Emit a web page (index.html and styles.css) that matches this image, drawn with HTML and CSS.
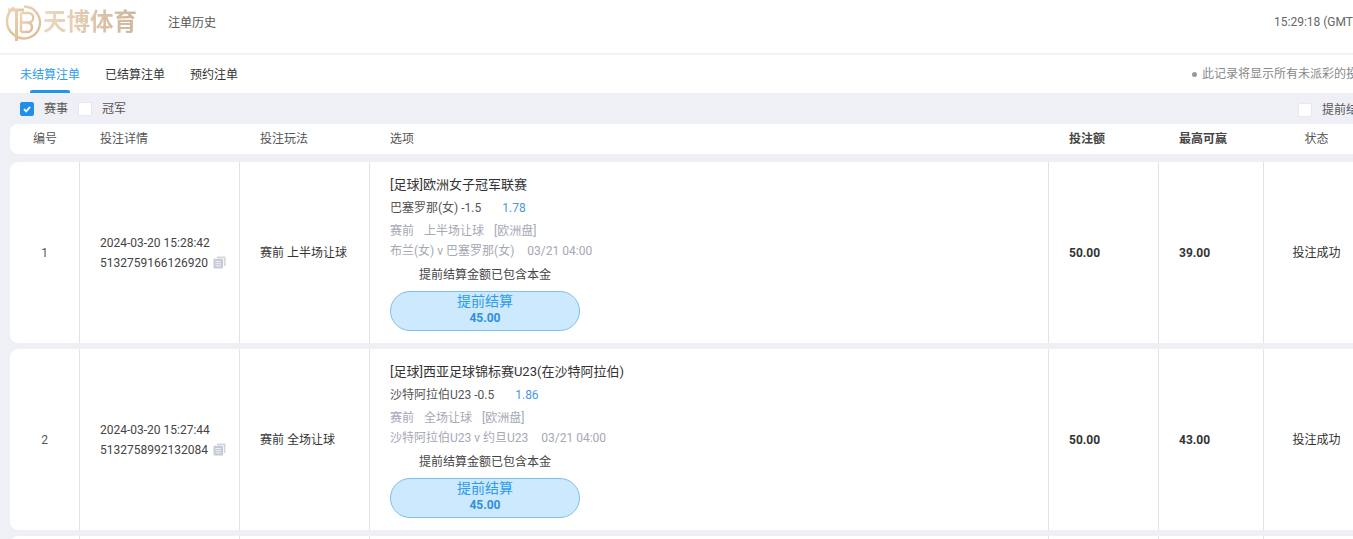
FILE: index.html
```html
<!DOCTYPE html>
<html lang="zh">
<head>
<meta charset="utf-8">
<title>注单历史</title>
<link rel="stylesheet" href="styles.css">
</head>
<body>
<div class="page">
  <header class="topbar">
    <div class="logo">
      <svg class="logo-mark" width="40" height="42" viewBox="0 0 40 42">
        <defs>
          <linearGradient id="gold" x1="0" y1="0" x2="1" y2="1">
            <stop offset="0" stop-color="#eed5b6"/>
            <stop offset="1" stop-color="#dcbb95"/>
          </linearGradient>
        </defs>
        <path d="M22 5.500A16 16 0 1 1 12 34" fill="none" stroke="url(#gold)" stroke-width="2.400"/>
        <path d="M12 6.500A17 17 0 0 0 12 34" fill="none" stroke="url(#gold)" stroke-width="2.400"/>
        <path d="M6 9H22M14.500 9V40" fill="none" stroke="url(#gold)" stroke-width="3"/>
        <path d="M19 12V31M19 12H26.500A4.500 4.500 0 0 1 26.500 21.500H19M26.500 21.500A5 5 0 0 1 26.500 31H19" fill="none" stroke="url(#gold)" stroke-width="2.400"/>
      </svg>
      <span class="logo-text">天博体育</span>
    </div>
    <span class="history">注单历史</span>
    <span class="clock">15:29:18 (GMT+8)</span>
  </header>
  <nav class="tabs">
    <a class="tab tab-active">未结算注单</a>
    <a class="tab">已结算注单</a>
    <a class="tab">预约注单</a>
    <span class="notice"><i class="dot"></i>此记录将显示所有未派彩的投注</span>
  </nav>
  <div class="main">
    <div class="filters">
      <label class="check"><span class="box box-on"><svg width="14" height="14" viewBox="0 0 14 14"><path d="M4 7.200L6.200 9.400L10 5" fill="none" stroke="#fff" stroke-width="1.800"/></svg></span>赛事</label>
      <label class="check"><span class="box"></span>冠军</label>
      <label class="check check-right"><span class="box"></span>提前结算</label>
    </div>
    <div class="row head">
      <div class="c c1">编号</div>
      <div class="c c2">投注详情</div>
      <div class="c c3">投注玩法</div>
      <div class="c c4">选项</div>
      <div class="c c5 strong">投注额</div>
      <div class="c c6 strong">最高可赢</div>
      <div class="c c7">状态</div>
    </div>

    <div class="row bet">
      <div class="c c1 num">1</div>
      <div class="c c2 detail">
        <div>2024-03-20 15:28:42</div>
        <div class="order">5132759166126920
          <svg class="copy" width="13" height="13" viewBox="0 0 13 13"><path d="M4 0.500H12.500V10H10.800V2.200H4Z" fill="#d3d6e0"/><rect x="0.500" y="2.800" width="9.500" height="9.700" rx="1" fill="#c6c9d6"/><path d="M2.500 5.500H8M2.500 7.700H8M2.500 9.900H8" stroke="#eceef3"/></svg>
        </div>
      </div>
      <div class="c c3 dark">赛前 上半场让球</div>
      <div class="c c4 option">
        <div class="league">[足球]欧洲女子冠军联赛</div>
        <div class="pick">巴塞罗那(女) -1.5<span class="odds">1.78</span></div>
        <div class="meta meta-first"><span>赛前</span><span>上半场让球</span><span>[欧洲盘]</span></div>
        <div class="meta meta-match"><span>布兰(女) v 巴塞罗那(女)</span><span>03/21 04:00</span></div>
        <div class="cash-note">提前结算金额已包含本金</div>
        <button class="cash-btn"><span class="cash-label">提前结算</span><b class="cash-val">45.00</b></button>
      </div>
      <div class="c c5 amount">50.00</div>
      <div class="c c6 amount">39.00</div>
      <div class="c c7 dark">投注成功</div>
    </div>

    <div class="row bet">
      <div class="c c1 num">2</div>
      <div class="c c2 detail">
        <div>2024-03-20 15:27:44</div>
        <div class="order">5132758992132084
          <svg class="copy" width="13" height="13" viewBox="0 0 13 13"><path d="M4 0.500H12.500V10H10.800V2.200H4Z" fill="#d3d6e0"/><rect x="0.500" y="2.800" width="9.500" height="9.700" rx="1" fill="#c6c9d6"/><path d="M2.500 5.500H8M2.500 7.700H8M2.500 9.900H8" stroke="#eceef3"/></svg>
        </div>
      </div>
      <div class="c c3 dark">赛前 全场让球</div>
      <div class="c c4 option">
        <div class="league">[足球]西亚足球锦标赛U23(在沙特阿拉伯)</div>
        <div class="pick">沙特阿拉伯U23 -0.5<span class="odds">1.86</span></div>
        <div class="meta meta-first"><span>赛前</span><span>全场让球</span><span>[欧洲盘]</span></div>
        <div class="meta meta-match"><span>沙特阿拉伯U23 v 约旦U23</span><span>03/21 04:00</span></div>
        <div class="cash-note">提前结算金额已包含本金</div>
        <button class="cash-btn"><span class="cash-label">提前结算</span><b class="cash-val">45.00</b></button>
      </div>
      <div class="c c5 amount">50.00</div>
      <div class="c c6 amount">43.00</div>
      <div class="c c7 dark">投注成功</div>
    </div>

    <div class="row bet">
      <div class="c c1"></div>
      <div class="c c2"></div>
      <div class="c c3"></div>
      <div class="c c4"></div>
      <div class="c c5"></div>
      <div class="c c6"></div>
      <div class="c c7"></div>
    </div>
  </div>
</div>
</body>
</html>
```
FILE: styles.css
```css
* { box-sizing: border-box; }
html, body { margin: 0; padding: 0; height: 539px; overflow: hidden; background: #fff; }
body { font: 12px/20px Roboto, "Noto Sans CJK SC", sans-serif; color: #555; }
.page { width: 1353px; height: 539px; overflow: hidden; }

.topbar {
  width: 1353px; height: 55px; display: flex; align-items: flex-start;
  border-bottom: 2px solid #f2f3f6; position: relative; white-space: nowrap;
}
.logo { width: 168px; height: 53px; display: flex; align-items: flex-start; padding: 1px 0 0 2px; }
.logo-mark { flex: none; }
.logo-text {
  font-size: 23.500px; line-height: 26px; font-weight: 700; margin: 8px 0 0 1px;
  width: 95px; color: transparent;
  background: linear-gradient(100deg, #efd9bf, #cdb49a);
  -webkit-background-clip: text; background-clip: text;
}
.history { margin-top: 13px; color: #555; }
.clock { position: absolute; left: 1274px; top: 12px; color: #666; }

.tabs { width: 1353px; height: 38px; display: flex; align-items: flex-start; padding-left: 20px; gap: 25px; position: relative; white-space: nowrap; }
.tab { height: 38px; line-height: 40px; color: #333; position: relative; }
.tab-active { color: #2d9cec; }
.tab-active::after { content: ""; position: absolute; left: 10px; bottom: 0; width: 40px; height: 3px; background: #2196e8; border-radius: 2px 2px 0 0; }
.notice { position: absolute; left: 1192px; top: 9px; color: #888; }
.dot { display: inline-block; width: 5px; height: 5px; border-radius: 50%; background: #999; margin-right: 5px; vertical-align: 1px; }

.main { background: #eff0f5; height: 446px; padding-left: 10px; width: 1353px; overflow: hidden; }
.filters { height: 31px; padding-top: 1px; display: flex; align-items: center; gap: 10px; margin-left: -10px; padding-left: 20px; position: relative; white-space: nowrap; }
.check { display: flex; align-items: center; gap: 10px; color: #555; }
.box { width: 14px; height: 14px; border-radius: 2px; background: #fff; display: block; border: 1px solid #e8e9ef; }
.box-on { background: #1e90ea; border-color: #1e90ea; }
.box-on svg { display: block; margin: -1px; }
.check-right { position: absolute; left: 1298px; top: 7px; }

.row { display: flex; background: #fff; border-radius: 8px 0 0 8px; width: 1400px; }
.head { height: 30px; margin-bottom: 8px; line-height: 30px; }
.bet { height: 181px; margin-bottom: 6px; }
.c { flex: none; }
.c1 { width: 70px; text-align: center; }
.c2 { width: 160px; padding-left: 20px; }
.c3 { width: 130px; padding-left: 20px; }
.c4 { width: 679px; padding-left: 20px; }
.c5 { width: 110px; padding-left: 20px; }
.c6 { width: 105px; padding-left: 20px; }
.c7 { width: 106px; text-align: center; padding-right: 1px; }
.strong { font-weight: 700; color: #444; }
.bet .c { border-right: 1px solid #e2e3ea; }
.bet .c7 { border-right: 0; }
.bet > .c { display: flex; flex-direction: column; justify-content: center; }
.num { color: #555; align-items: center; }
.detail { color: #444; }
.order { display: flex; align-items: center; gap: 5px; }
.copy { flex: none; }
.dark { color: #333; }
.amount { font-weight: 700; color: #333; }

.bet > .option { justify-content: flex-start; padding-top: 13px; }
.league { color: #333; font-size: 13px; line-height: 20px; }
.pick { color: #555; margin-top: 3px; line-height: 20px; }
.odds { color: #4a98de; margin-left: 21px; }
.meta { color: #a5a8b5; line-height: 20px; display: flex; gap: 10px; }
.meta-first { margin-top: 3px; }
.meta-match { gap: 13px; margin-top: 0; }
.cash-note { color: #444; padding-left: 29px; margin-top: 4px; line-height: 20px; }
.cash-btn {
  display: flex; flex-direction: column; align-items: center; justify-content: flex-start;
  width: 190px; height: 40px; margin-top: 6px; padding: 0; border-radius: 20px;
  border: 1px solid #7fbfee; background: #cde9fd; font-family: inherit;
}
.cash-label { color: #2d9cec; font-size: 14px; line-height: 19px; }
.cash-val { color: #2f8fe0; font-size: 12px; line-height: 15px; }
```
